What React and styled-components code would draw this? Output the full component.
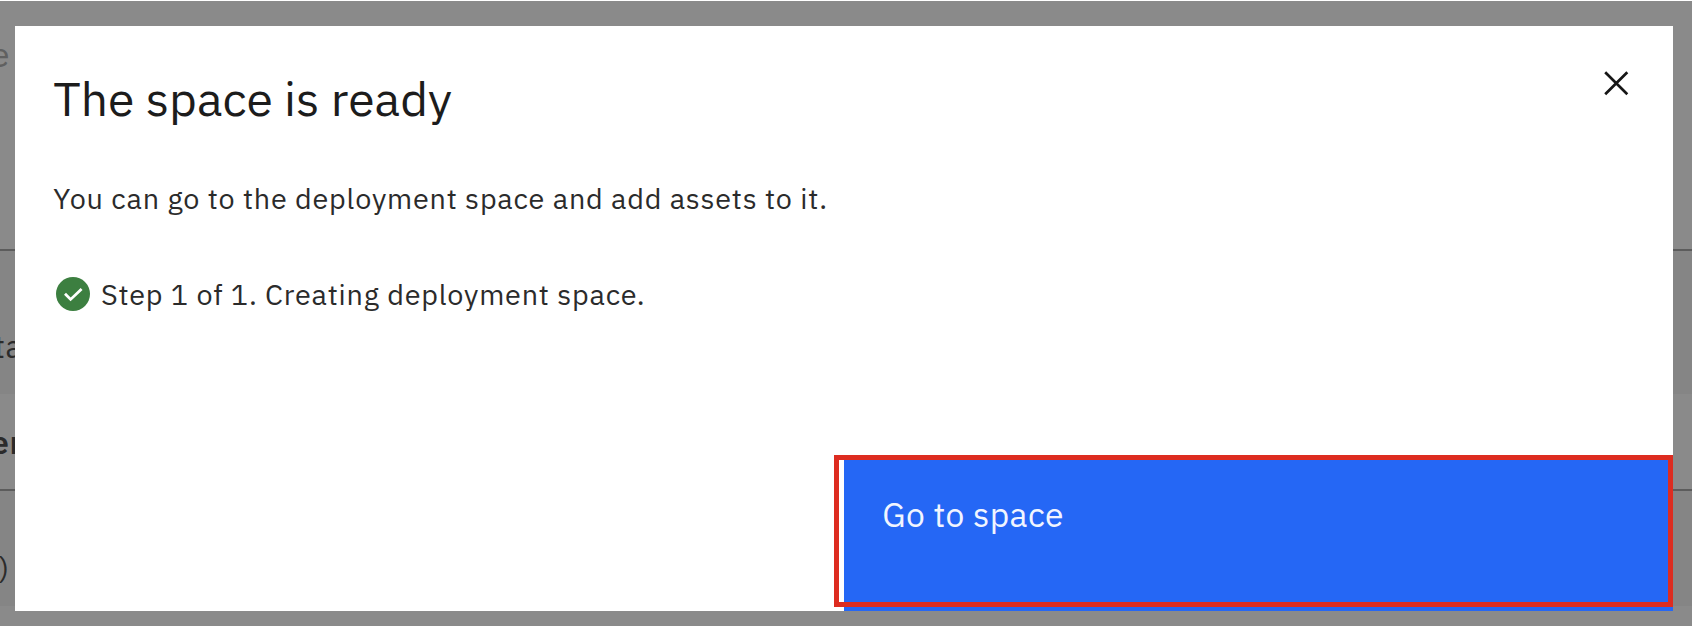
import React from "react";
import styled, { createGlobalStyle } from "styled-components";

const GlobalStyle = createGlobalStyle`
  * { box-sizing: border-box; }
  body { margin: 0; background: #8a8a8a; overflow: hidden; }
  button { font: inherit; border: 0; padding: 0; margin: 0; background: none; cursor: pointer; }
`;

const Screen = styled.main`
  position: relative;
  height: 626px;
  overflow: hidden;
  border-top: 1px solid #fff;
  font-family: "IBM Plex Sans", "Open Sans", "Noto Sans", sans-serif;
  color: #1c1c1c;
`;

const PageRow = styled.div`
  display: flex;
  align-items: flex-start;
  height: ${(p) => p.$height}px;
  padding-top: ${(p) => p.$top || 0}px;
  background: ${(p) => (p.$shaded ? "#858585" : "#8a8a8a")};
  border-bottom: ${(p) => (p.$ruled ? "2px solid #5c5c5c" : "0")};
`;

const PageText = styled.span`
  margin-left: ${(p) => p.$shift}px;
  font-size: ${(p) => p.$size || 28.8}px;
  line-height: 36px;
  letter-spacing: 0.6px;
  font-weight: ${(p) => (p.$strong ? 600 : 400)};
  color: ${(p) => p.$color || "#2b2b2b"};
`;

const Dialog = styled.section`
  position: absolute;
  top: 24.5px;
  left: 15.3px;
  width: 1658px;
  height: 585.5px;
  display: flex;
  flex-direction: column;
  background: #fff;
`;

const Header = styled.header`
  display: flex;
  justify-content: space-between;
  align-items: flex-start;
  padding: 40px 43.7px 0 38px;
`;

const Title = styled.h1`
  margin: 0;
  font-size: 48px;
  line-height: 64px;
  font-weight: 400;
  white-space: nowrap;
`;

const CloseButton = styled.button`
  display: flex;
  margin-top: 4.5px;
`;

const Body = styled.div`
  padding: 48.5px 38px 0;
  flex: 1;
`;

const Line = styled.p`
  margin: 0;
  font-size: 28.8px;
  line-height: 40px;
  letter-spacing: 0.77px;
  color: #2b2b2b;
  white-space: nowrap;
`;

const Step = styled.div`
  display: flex;
  align-items: center;
  gap: 10.9px;
  margin-top: 56px;
  padding-left: 2.8px;
`;

const Footer = styled.footer`
  display: flex;
  justify-content: flex-end;
`;

const PrimaryButton = styled.button`
  position: relative;
  width: 829px;
  height: 154px;
  padding: 36px 38px 0;
  display: flex;
  align-items: flex-start;
  background: #2567f5;
  color: #f1f5ff;
`;

const ButtonLabel = styled.span`
  font-size: 33.6px;
  line-height: 44px;
  letter-spacing: 0.38px;
  white-space: nowrap;
`;

const Highlight = styled.span`
  position: absolute;
  top: -2px;
  right: 0.3px;
  width: 839px;
  height: 152px;
  border: 5px solid #dd2c20;
`;

const CloseIcon = () => (
  <svg width="27" height="27" viewBox="0 0 27 27" fill="none">
    <path d="M2.2 2.2 24.3 24.3M24.3 2.2 2.2 24.3" stroke="#161616" strokeWidth="2.7" />
  </svg>
);

const CheckmarkSvg = styled.svg`
  margin-bottom: 1px;
`;

const DoneIcon = () => (
  <CheckmarkSvg width="34" height="34" viewBox="0 0 34 34">
    <circle cx="17" cy="17" r="17" fill="#3c7f40" />
    <path d="M9 16.7 14.6 22.4 25.6 12" fill="none" stroke="#fff" strokeWidth="2.8" />
  </CheckmarkSvg>
);

export default function App() {
  return (
    <Screen>
      <GlobalStyle />
      <PageRow $height={250} $top={36} $ruled>
        <PageText $shift={-9} $size={33.6} $color="#606060">e</PageText>
      </PageRow>
      <PageRow $height={143} $top={78} $shaded>
        <PageText $shift={-6} $size={31}>ta</PageText>
      </PageRow>
      <PageRow $height={97} $top={30} $ruled>
        <PageText $shift={-9} $size={32} $strong>er</PageText>
      </PageRow>
      <PageRow $height={115} $top={59} $shaded>
        <PageText $shift={-1} $size={30}>)</PageText>
      </PageRow>
      <PageRow $height={20} />

      <Dialog role="dialog" aria-modal="true">
        <Header>
          <Title>The space is ready</Title>
          <CloseButton aria-label="Close">
            <CloseIcon />
          </CloseButton>
        </Header>
        <Body>
          <Line>You can go to the deployment space and add assets to it.</Line>
          <Step>
            <DoneIcon />
            <Line>Step 1 of 1. Creating deployment space.</Line>
          </Step>
        </Body>
        <Footer>
          <PrimaryButton>
            <ButtonLabel>Go to space</ButtonLabel>
            <Highlight />
          </PrimaryButton>
        </Footer>
      </Dialog>
    </Screen>
  );
}
